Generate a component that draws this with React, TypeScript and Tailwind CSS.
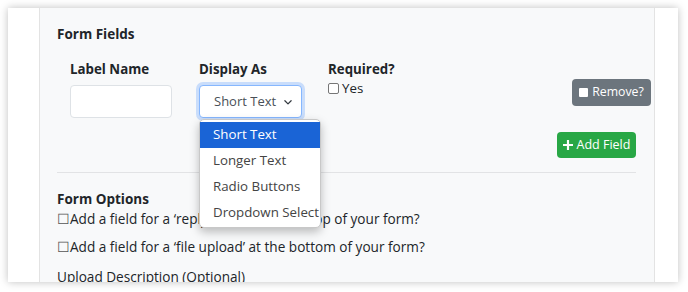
import React, { useState } from 'react';

const options = ['Short Text', 'Longer Text', 'Radio Buttons', 'Dropdown Select'];

const App: React.FC = () => {
  const [selected] = useState<string>('Short Text');

  return (
    <div className="w-[688px] h-[292px] bg-white p-2 overflow-hidden" style={{ fontFamily: '"Open Sans", "Noto Sans", sans-serif' }}>
      <div className="h-[274px] w-[670px] bg-white shadow-[0_0_8px_rgba(0,0,0,0.25)] flex overflow-hidden">
        <div className="w-8 border-r border-[#e3e3e3]" />
        <div className="flex-1 bg-[#f8f9fa] pl-[17px] pr-[18px] text-[#212529]">
          <div className="h-[21px] mt-[16px] text-[13.5px] font-bold leading-[21px]">Form Fields</div>

          <div className="relative flex pl-[13px] mt-[13px] -mr-4">
            <div className="w-[129px]">
              <div className="text-[13.3px] font-bold leading-[22px]">Label Name</div>
              <input className="mt-[5px] w-[102px] h-[33px] bg-white border border-[#dee2e6] rounded" />
            </div>
            <div className="w-[129px] relative">
              <div className="text-[13.3px] font-bold leading-[22px]">Display As</div>
              <div className="mt-[5px] w-[103px] h-[33px] bg-white border border-[#86b7fe] rounded shadow-[0_0_0_3px_rgba(13,110,253,0.2)] flex items-center pl-[14px] pr-[8px] text-[13px] text-[#495057] whitespace-nowrap">
                <span className="flex-1">{selected}</span>
                <svg width="10" height="10" viewBox="0 0 16 16" fill="none" stroke="#343a40" strokeWidth="2" strokeLinecap="round" strokeLinejoin="round">
                  <path d="M3 6l5 5 5-5" />
                </svg>
              </div>
              {/* open dropdown list lies over the rows below */}
              <div className="absolute left-0 top-[61px] w-[122px] bg-white rounded-[5px] border border-[#c8c8c8] shadow-[0_4px_10px_rgba(0,0,0,0.25)] z-10 pt-[2px] pb-px">
                {options.map((o) => (
                  <div
                    key={o}
                    className={
                      o === selected
                        ? 'h-[26px] pl-[13px] flex items-center text-[13.3px] whitespace-nowrap bg-[#1a64d6] text-white'
                        : 'h-[26px] pl-[13px] flex items-center text-[13.3px] whitespace-nowrap text-[#444]'
                    }
                  >
                    {o}
                  </div>
                ))}
              </div>
            </div>
            <div className="w-[129px]">
              <div className="text-[13.3px] font-bold leading-[22px]">Required?</div>
              <label className="flex items-center gap-[3px] text-[13.3px] leading-[16px]">
                <span className="w-[11px] h-[11px] border border-[#767676] rounded-[2px] bg-white inline-block" />
                Yes
              </label>
            </div>
            <div className="flex-1 flex justify-end pr-[1px]">
              <button className="mt-[21px] h-[27px] w-[79px] bg-[#6c757d] text-white text-[12.3px] rounded-[4px] flex items-center justify-center gap-[4px] whitespace-nowrap">
                <span className="w-[9px] h-[9px] bg-white rounded-[1px] inline-block" />
                Remove?
              </button>
            </div>
          </div>

          <div className="flex justify-end mt-[14px]">
            <button className="h-[26px] w-[79px] bg-[#28a745] text-white text-[12.5px] rounded-[4px] flex items-center justify-center gap-[4px] whitespace-nowrap">
              <svg width="10" height="10" viewBox="0 0 12 12" fill="white">
                <path d="M4.7 0h2.6v4.7H12v2.6H7.3V12H4.7V7.3H0V4.7h4.7z" />
              </svg>
              Add Field
            </button>
          </div>

          <div className="mt-[14px] border-t border-[#e2e3e5]" />

          <div className="mt-[16px] text-[13.5px] font-bold leading-[20px]">Form Options</div>
          <div className="text-[13.6px] leading-[20px] whitespace-nowrap">
            <div><span className="text-[#555]">☐</span>Add a field for a ‘reply-to’ email at the top of your form?</div>
            <div className="mt-[8px]"><span className="text-[#555]">☐</span>Add a field for a ‘file upload’ at the bottom of your form?</div>
            <div className="mt-[10px]">Upload Description (Optional)</div>
          </div>
        </div>
        <div className="w-6 border-l border-[#e3e3e3]" />
      </div>
    </div>
  );
};

export default App;
